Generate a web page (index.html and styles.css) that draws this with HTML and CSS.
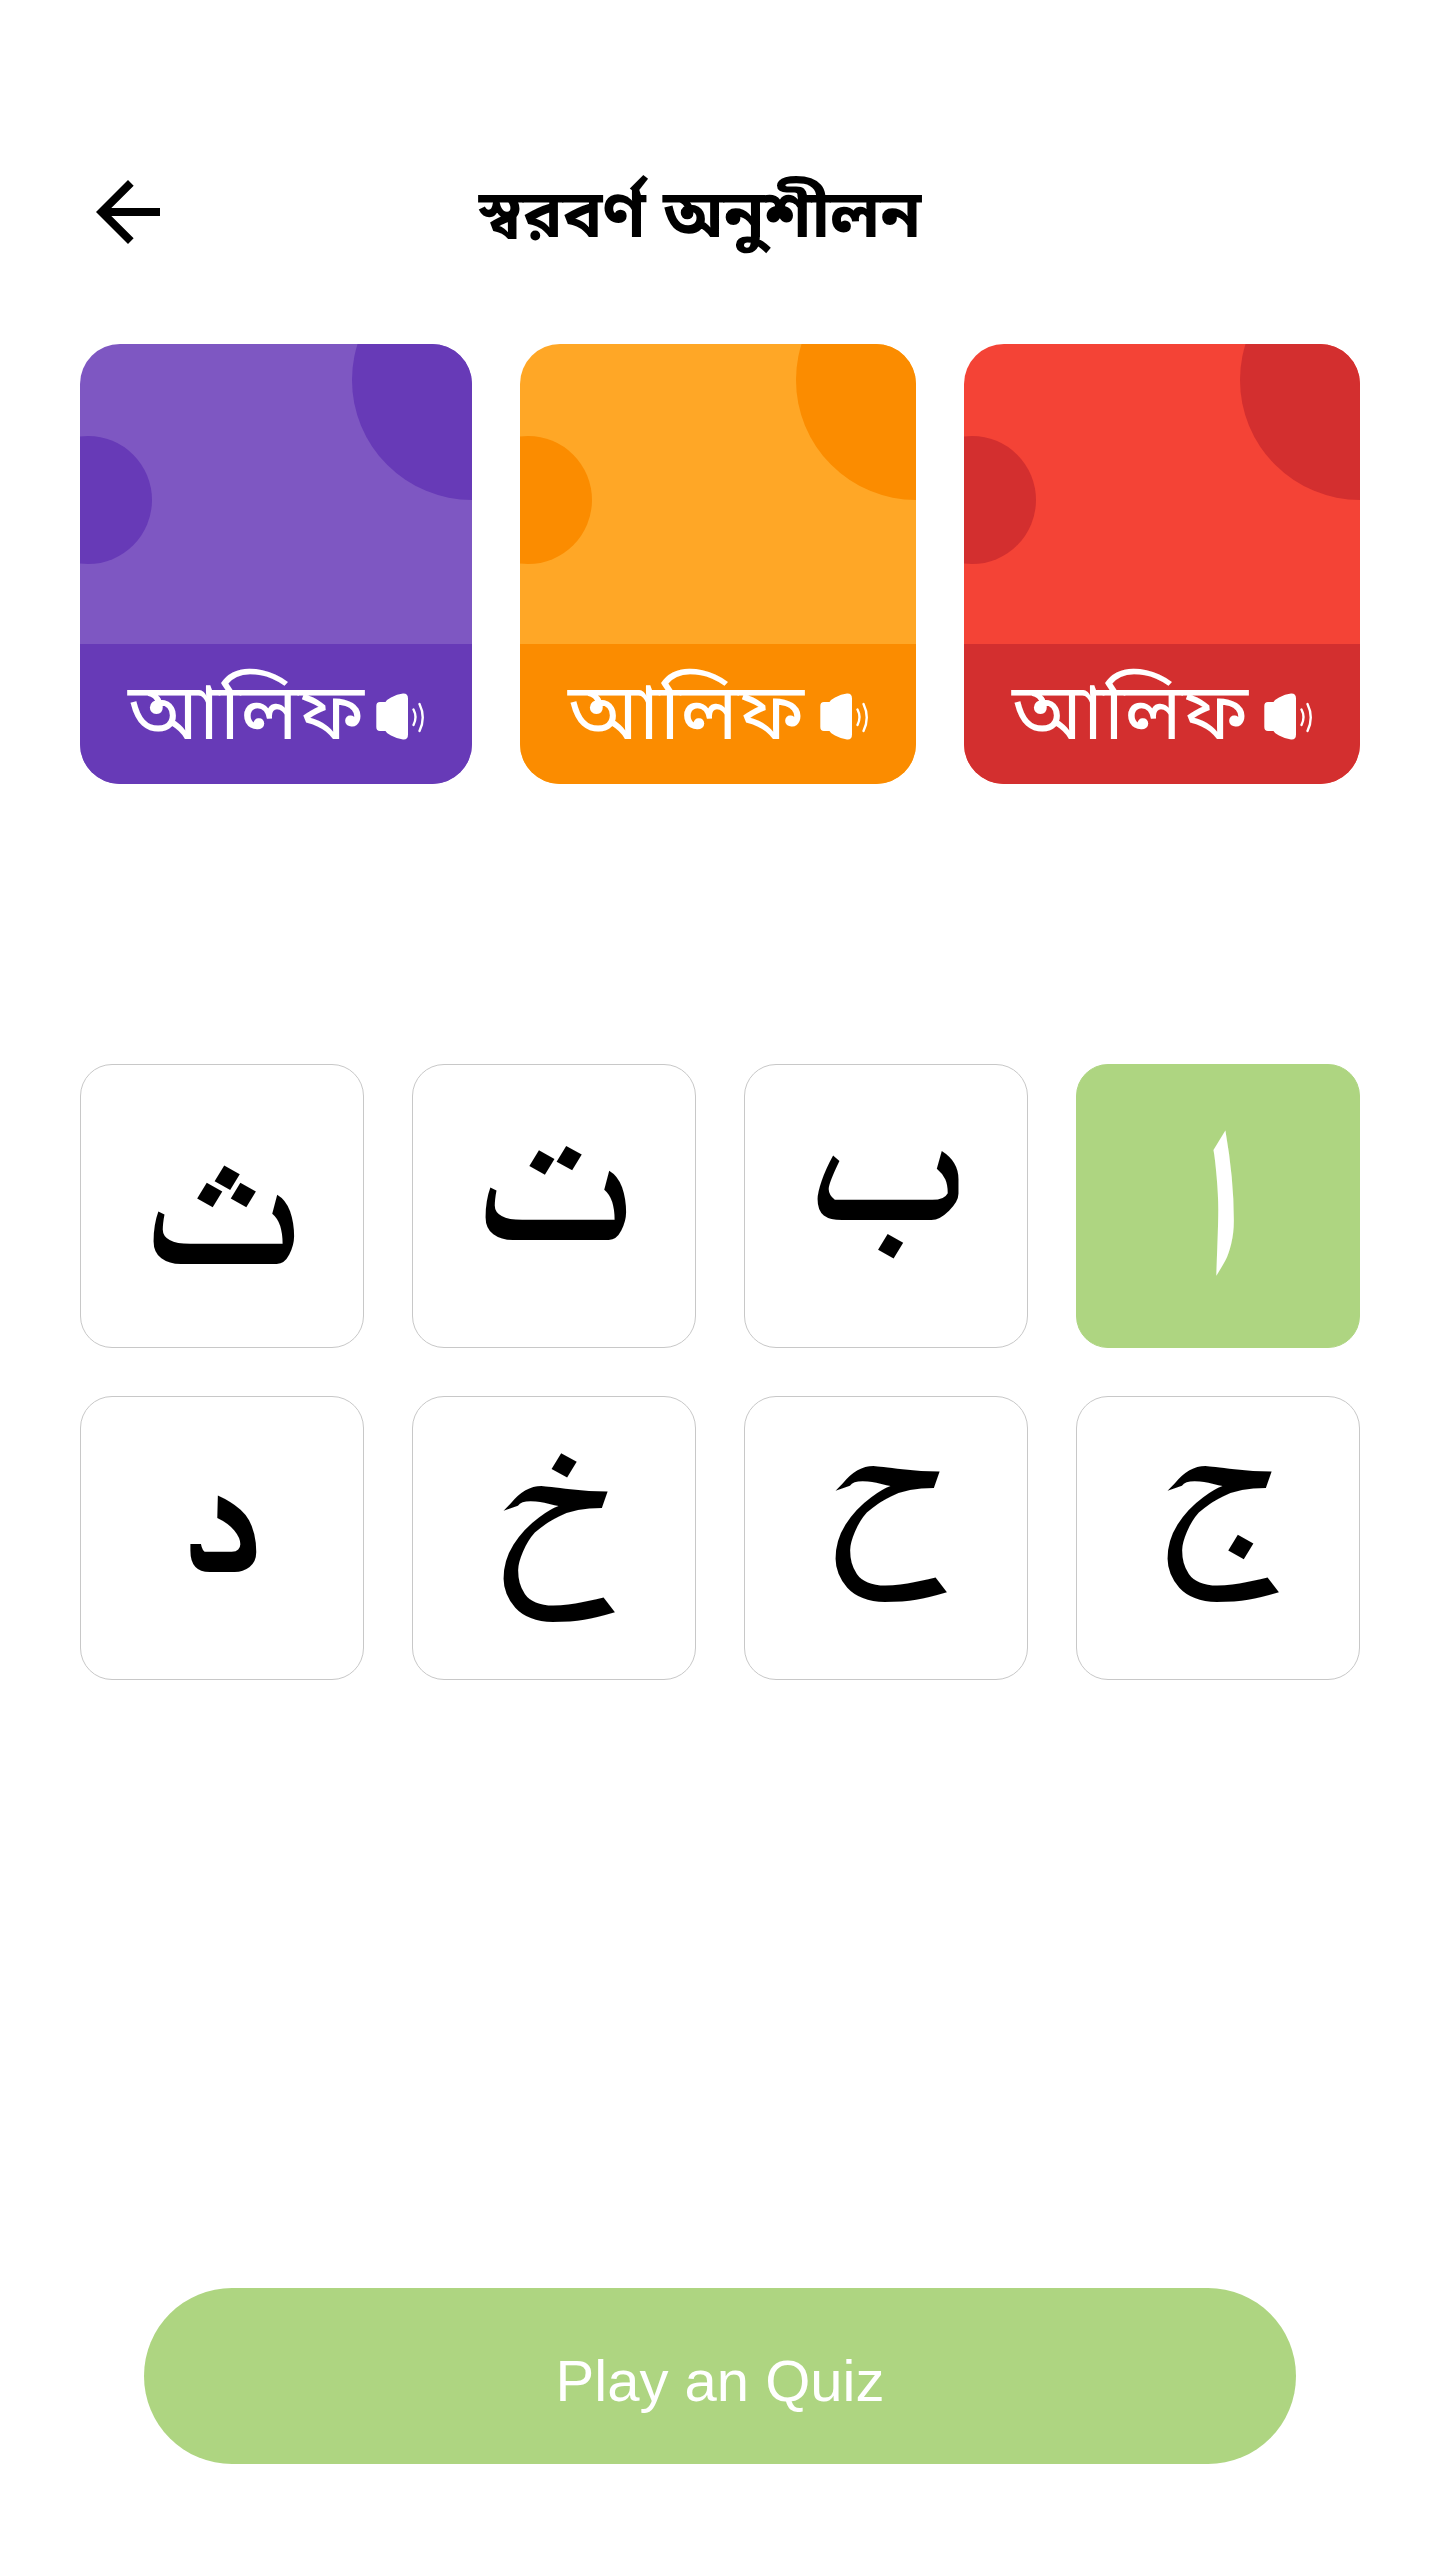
FILE: index.html
```html
<!DOCTYPE html>
<html lang="bn">
<head>
<meta charset="utf-8">
<meta name="viewport" content="width=device-width, initial-scale=1">
<title>স্বরবর্ণ অনুশীলন</title>
<link rel="stylesheet" href="styles.css">
</head>
<body>
<svg class="defs" aria-hidden="true">
  <symbol id="speaker" viewBox="12 29 54 54">
    <path fill="currentColor" d="M20 42H25.500Q26.500 39.800 31 37.500Q37 34.300 43 33.600Q48 33.300 48 38.500V74.500Q48 80 43 79.500Q37 78.800 31 75.500Q26.500 73 25.500 71H20Q16.300 71 16.300 67V46Q16.300 42 20 42Z"/>
    <path fill="none" stroke="currentColor" stroke-width="2.400" stroke-linecap="round" d="M53.500 49.500Q57.500 57 53.500 65M59.500 44Q66 57.500 59.500 71"/>
  </symbol>
</svg>
<main class="screen">
  <header class="topbar">
    <button class="back" type="button" aria-label="Back">
      <svg viewBox="0 0 24 24" aria-hidden="true"><path d="M20 11H7.830L13.420 5.410L12 4L4 12L12 20L13.410 18.590L7.830 13H20Z"/></svg>
    </button>
    <h1 class="title">স্বরবর্ণ অনুশীলন</h1>
  </header>
  <section class="cards">
    <button class="card card--purple" type="button"><span class="caption"><span class="word">আলিফ</span><svg class="speaker" aria-hidden="true"><use href="#speaker"/></svg></span></button>
    <button class="card card--orange" type="button"><span class="caption"><span class="word">আলিফ</span><svg class="speaker" aria-hidden="true"><use href="#speaker"/></svg></span></button>
    <button class="card card--red" type="button"><span class="caption"><span class="word">আলিফ</span><svg class="speaker" aria-hidden="true"><use href="#speaker"/></svg></span></button>
  </section>
  <section class="letters" dir="rtl" lang="ar">
    <button class="letter letter--active" type="button">ا</button>
    <button class="letter letter--deep" type="button">ب</button>
    <button class="letter letter--mid" type="button">ت</button>
    <button class="letter" type="button">ث</button>
    <button class="letter letter--deep" type="button">ج</button>
    <button class="letter letter--deep" type="button">ح</button>
    <button class="letter letter--mid" type="button">خ</button>
    <button class="letter letter--mid" type="button">د</button>
  </section>
  <button class="quiz" type="button" lang="en">Play an Quiz</button>
</main>
</body>
</html>
```
FILE: styles.css
```css
* {
  box-sizing: border-box;
}

body {
  margin: 0;
  background: #fff;
  color: #000;
  font-family: "Noto Sans Bengali", "Noto Sans", sans-serif;
}

button {
  margin: 0;
  padding: 0;
  border: 0;
  background: none;
  color: inherit;
  font: inherit;
  cursor: pointer;
}

.defs {
  display: none;
}

.screen {
  display: flex;
  flex-direction: column;
  min-height: 100vh;
  padding: 164px 80px 96px;
}

.topbar {
  display: flex;
  align-items: center;
  height: 96px;
  padding-right: 136px;
}

.back {
  width: 96px;
  height: 96px;
}

.back svg {
  display: block;
  width: 100%;
  height: 100%;
}

.title {
  flex: 1;
  margin: 0;
  padding-top: 16px;
  font-size: 66px;
  font-weight: 700;
  line-height: 96px;
  text-align: center;
}

.cards {
  display: grid;
  grid-template-columns: 98fr 99fr 99fr;
  gap: 48px;
  margin-top: 84px;
}

.card {
  position: relative;
  display: flex;
  align-items: flex-end;
  height: 440px;
  border-radius: 40px;
  overflow: hidden;
  background: var(--light);
  color: #fff;
}

.card::before,
.card::after {
  content: "";
  position: absolute;
  border-radius: 50%;
  background: var(--dark);
}

.card::before {
  top: -84px;
  right: -120px;
  width: 240px;
  height: 240px;
}

.card::after {
  top: 92px;
  left: -56px;
  width: 128px;
  height: 128px;
}

.card--purple {
  --light: #7e57c2;
  --dark: #673ab7;
}

.card--orange {
  --light: #ffa726;
  --dark: #fb8c00;
}

.card--red {
  --light: #f44336;
  --dark: #d32f2f;
}

.caption {
  display: flex;
  align-items: center;
  justify-content: space-between;
  width: 100%;
  height: 140px;
  padding: 4px 46px 0 48px;
  background: var(--dark);
}

.word {
  padding-top: 6px;
  font-size: 79px;
  line-height: 120px;
}

.speaker {
  width: 54px;
  height: 54px;
}

.letters {
  display: grid;
  grid-template-columns: repeat(4, 1fr);
  gap: 48px;
  margin-top: 280px;
}

.letter {
  aspect-ratio: 1;
  border: 1px solid #c8c8c8;
  border-radius: 32px;
  font-family: FreeSerif, Amiri, "Liberation Serif", serif;
  font-size: 192px;
  font-weight: 700;
  line-height: 180px;
}

.letter--mid {
  padding-bottom: 48px;
}

.letter--deep {
  padding-bottom: 88px;
}

.letter--active {
  border-color: #aed581;
  background: #aed581;
  color: #fff;
}

.quiz {
  height: 176px;
  margin: auto 64px 0;
  padding-top: 8px;
  border-radius: 88px;
  background: #aed581;
  color: #fff;
  font-family: "Liberation Sans", Arial, sans-serif;
  font-size: 58px;
}
```
